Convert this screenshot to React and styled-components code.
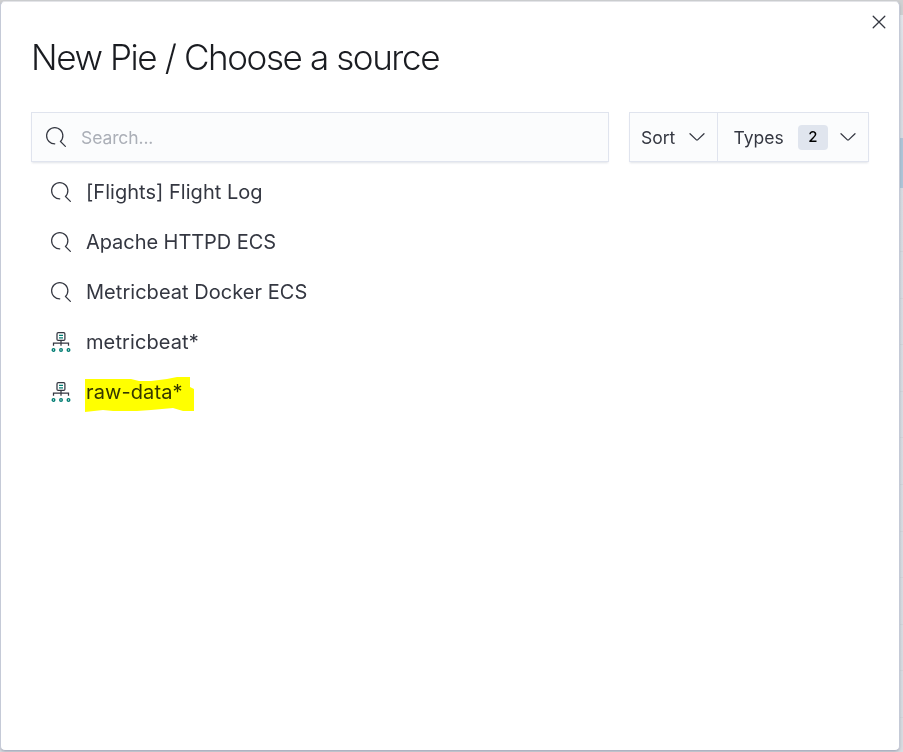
import React from 'react';
import styled, { createGlobalStyle } from 'styled-components';

const GlobalStyle = createGlobalStyle`
  * { box-sizing: border-box; }
  body { margin: 0; overflow: hidden; font-family: Inter, sans-serif; color: #343741; }
  button, input { font: inherit; color: inherit; }
`;

const Backdrop = styled.div`
  position: relative;
  width: 903px;
  height: 752px;
  padding: 1px 3px 1px 0;
  background:
    repeating-linear-gradient(transparent 0 45px, #d2d5da 45px 46px, transparent 46px 46.6px) 0 206px / 100% 546px no-repeat,
    linear-gradient(#d0d1d2 0 15px, #e3e6eb 15px, #dadde3 76px, #d9dce1 100%);
`;

const PageAction = styled.span`
  position: absolute;
  top: 138px;
  right: 0;
  width: 4px;
  height: 50px;
  background: #b0c6d9;
`;

const Modal = styled.section`
  position: relative;
  display: flex;
  flex-direction: column;
  height: 750px;
  padding: 30px 30px 0;
  background: #fff;
  border: 1px solid #c5cad7;
  border-top-color: #e3e4e8;
  border-bottom-color: #aeb2c2;
  border-radius: 5px;
  box-shadow: 0 1px 3px rgba(100, 106, 125, 0.35);
`;

const CloseButton = styled.button`
  position: absolute;
  top: 10px;
  right: 10px;
  display: flex;
  align-items: center;
  justify-content: center;
  width: 20px;
  height: 20px;
  padding: 0;
  border: 0;
  background: none;
`;

const Title = styled.h1`
  margin: 0;
  height: 80px;
  padding-top: 3px;
  font-size: 35px;
  line-height: 44px;
  font-weight: 300;
  letter-spacing: -1.4px;
  white-space: nowrap;
  color: #1a1c21;
`;

const Toolbar = styled.div`
  display: flex;
  gap: 20px;
`;

const ControlBox = styled.div`
  display: flex;
  align-items: center;
  height: 50px;
  background: #fbfcfd;
  border: 1px solid #e0e4ee;
  box-shadow: 0 2px 2px -1px rgba(152, 162, 179, 0.3);
`;

const SearchBox = styled(ControlBox)`
  width: 578px;
  padding-left: 14px;
  gap: 15px;
`;

const SearchInput = styled.input`
  flex: 1;
  min-width: 0;
  padding: 0;
  border: 0;
  outline: 0;
  background: none;
  font-size: 17.5px;
  letter-spacing: -0.1px;
  &::placeholder { color: #abafb7; opacity: 1; }
`;

const Filters = styled(ControlBox)`
  width: 240px;
`;

const FilterButton = styled.button`
  display: flex;
  align-items: center;
  justify-content: space-between;
  width: ${(p) => p.$width}px;
  height: 48px;
  padding: ${(p) => p.$padding};
  border: 0;
  border-left: ${(p) => (p.$divided ? '1px solid #e0e4ee' : '0')};
  background: none;
  font-size: 17.5px;
  letter-spacing: 0;
`;

const Badge = styled.span`
  width: 30px;
  height: 25px;
  margin-left: 2px;
  border-radius: 4px;
  background: #e0e5ee;
  color: #000;
  font-size: 15px;
  font-weight: 500;
  line-height: 24px;
  text-align: center;
`;

const SourceList = styled.ul`
  margin: 5px 0 0;
  padding: 0 0 0 20px;
  list-style: none;
`;

const SourceRow = styled.li`
  display: flex;
  align-items: center;
  gap: 15px;
  height: 50px;
`;

const SourceName = styled.span`
  position: relative;
  font-size: 20px;
  line-height: 30px;
  letter-spacing: ${(p) => p.$tracking}px;
  white-space: nowrap;
`;

const Marker = styled.svg`
  position: absolute;
  left: -1px;
  top: 0;
  mix-blend-mode: multiply;
`;

const Icon = styled.svg`
  display: block;
  flex: none;
`;

const SearchIcon = () => (
  <Icon width="20" height="20" viewBox="0 0 16 16" fill="#343741">
    <path d="M11.271 11.978l3.872 3.873a.502.502 0 00.708 0 .502.502 0 000-.708l-3.565-3.564c2.38-2.747 2.267-6.923-.342-9.532-2.73-2.73-7.17-2.73-9.898 0-2.728 2.729-2.728 7.17 0 9.9a6.955 6.955 0 004.949 2.05.5.5 0 000-1 5.96 5.96 0 01-4.242-1.757 6.01 6.01 0 010-8.486 6.004 6.004 0 018.484 0 6.01 6.01 0 010 8.486.5.5 0 00-.034.738z" />
  </Icon>
);

const IndexIcon = () => (
  <Icon width="20" height="20" viewBox="0 0 20 20" fill="none" strokeWidth="1.25">
    <rect x="6" y="0.7" width="7.9" height="7.7" rx="1.2" stroke="#343741" />
    <path d="M10 8.5v5.2M2.5 13.8v-2.7h15v2.7" stroke="#343741" />
    <path d="M8 3.3h4M8 5.8h4" stroke="#017d73" />
    <g stroke="#017d73" strokeWidth="1.4">
      <circle cx="2.5" cy="17.9" r="1.3" />
      <circle cx="10" cy="17.9" r="1.3" />
      <circle cx="17.5" cy="17.9" r="1.3" />
    </g>
  </Icon>
);

const Chevron = () => (
  <Icon width="16" height="10" viewBox="0 0 16 10" fill="none" stroke="#343741" strokeWidth="1.25" strokeLinecap="round" strokeLinejoin="round">
    <path d="M1 1.7l6.4 6.2a.9.9 0 0 0 1.2 0L15 1.7" />
  </Icon>
);

const CloseIcon = () => (
  <Icon width="14" height="14" viewBox="0 0 14 14" stroke="#343741" strokeWidth="1.3" strokeLinecap="round">
    <path d="M1.2 1.2l11.6 11.6M12.8 1.2L1.2 12.8" />
  </Icon>
);

const sources = [
  { name: '[Flights] Flight Log', type: 'search', tracking: 0.03 },
  { name: 'Apache HTTPD ECS', type: 'search', tracking: -0.06 },
  { name: 'Metricbeat Docker ECS', type: 'search', tracking: 0.04 },
  { name: 'metricbeat*', type: 'index', tracking: 0.1 },
  { name: 'raw-data*', type: 'index', tracking: 0.1, marked: true },
];

export default function App() {
  return (
    <>
      <GlobalStyle />
      <Backdrop>
        <PageAction />
        <Modal role="dialog" aria-labelledby="title">
          <CloseButton aria-label="Close"><CloseIcon /></CloseButton>
          <Title id="title">New Pie / Choose a source</Title>
          <Toolbar>
            <SearchBox>
              <SearchIcon />
              <SearchInput placeholder="Search..." />
            </SearchBox>
            <Filters>
              <FilterButton $width={87} $padding="0 12px 0 11px">Sort<Chevron /></FilterButton>
              <FilterButton $width={151} $divided $padding="0 12px 0 15.5px">
                Types<Badge>2</Badge><Chevron />
              </FilterButton>
            </Filters>
          </Toolbar>
          <SourceList>
            {sources.map(({ name, type, marked, tracking }) => (
              <SourceRow key={name}>
                {type === 'search' ? <SearchIcon /> : <IndexIcon />}
                <SourceName $tracking={tracking}>
                  {name}
                  {marked && (
                    <Marker width="110" height="36" viewBox="0 0 110 36" fill="#ff0">
                      <path d="M0 2H46L54 4H66L82 2L92 0H105V10L109 12V34H98L88 31L66 33L52 34H28L18 33L0 35Z" />
                    </Marker>
                  )}
                </SourceName>
              </SourceRow>
            ))}
          </SourceList>
        </Modal>
      </Backdrop>
    </>
  );
}
